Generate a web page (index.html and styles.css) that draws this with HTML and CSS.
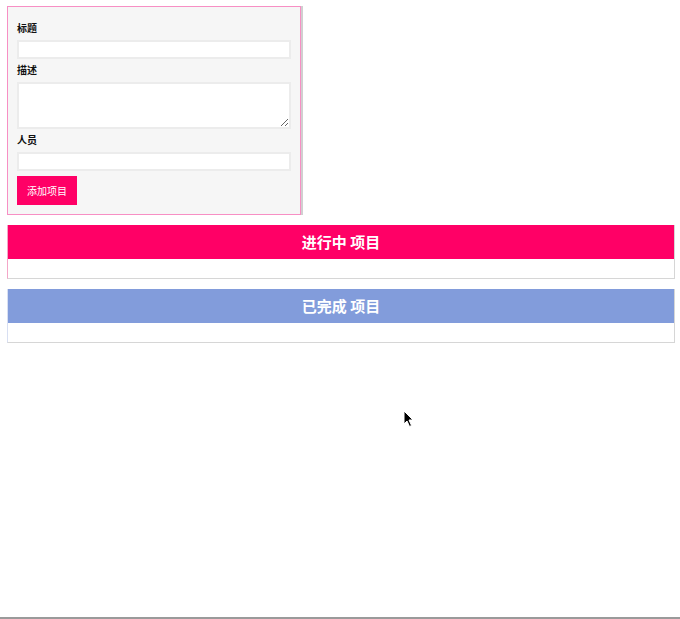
FILE: index.html
```html
<!DOCTYPE html>
<html lang="zh">
<head>
    <meta charset="UTF-8">
    <meta name="viewport" content="width=device-width, initial-scale=1.0">
    <title>项目看板</title>
    <link rel="stylesheet" href="styles.css">
</head>
<body>
    <div class="page">
        <form class="project-form">
            <div class="form-group">
                <label for="title">标题</label>
                <input type="text" id="title">
            </div>
            <div class="form-group">
                <label for="description">描述</label>
                <textarea id="description"></textarea>
            </div>
            <div class="form-group">
                <label for="people">人员</label>
                <input type="text" id="people">
            </div>
            <button type="button">添加项目</button>
        </form>

        <section class="projects active">
            <h2>进行中 项目</h2>
            <ul></ul>
        </section>

        <section class="projects finished">
            <h2>已完成 项目</h2>
            <ul></ul>
        </section>

        <svg class="cursor" width="12" height="18" viewBox="0 0 12 18">
            <path d="M1 1 L1 14 L4 11 L6.5 16.5 L8.5 15.5 L6 10 L10 10 Z" fill="#000" stroke="#fff" stroke-width="1"/>
        </svg>
    </div>
</body>
</html>
```

FILE: styles.css
```css
* {
    box-sizing: border-box;
}
body {
    margin: 0;
    font-family: "Noto Sans CJK SC", "Noto Sans", sans-serif;
    background: #fff;
}
.page {
    position: relative;
    min-height: 100vh;
    padding: 6px 5px 0 7px;
    border-bottom: 2px solid #9a9a9a;
}
.project-form {
    width: 294px;
    margin: 0 0 10px;
    padding: 15px 9px 9px;
    background: #f6f6f6;
    border: 1px solid #f78fc4;
    box-shadow: 2px 0 0 #d0d0d0;
}
.form-group label {
    display: block;
    font-size: 10px;
    line-height: 12px;
    font-weight: bold;
    color: #111;
    margin-bottom: 6px;
}
.form-group input,
.form-group textarea {
    display: block;
    width: 100%;
    height: 19px;
    margin: 0 0 5px;
    border: 2px solid #ececec;
    background: #fff;
    font: inherit;
}
.form-group textarea {
    height: 47px;
}
.project-form button {
    display: block;
    height: 29px;
    padding: 0 10px;
    border: none;
    background: #ff0066;
    color: #fff;
    font-family: inherit;
    font-size: 10px;
    cursor: pointer;
}
.projects {
    margin-bottom: 10px;
    border: 1px solid #d6d6d6;
    border-top: none;
}
.projects h2 {
    margin: 0;
    height: 34px;
    line-height: 34px;
    text-align: center;
    font-size: 15px;
    font-weight: bold;
    color: #fff;
}
.projects ul {
    margin: 0;
    padding: 0;
    height: 19px;
    list-style: none;
}
.active {
    border-left-color: #f4a6c8;
}
.active h2 {
    background: #ff0066;
}
.finished {
    border-left-color: #d8dff2;
}
.finished h2 {
    background: #829cdb;
}
.cursor {
    position: absolute;
    left: 403px;
    top: 410px;
}
```
